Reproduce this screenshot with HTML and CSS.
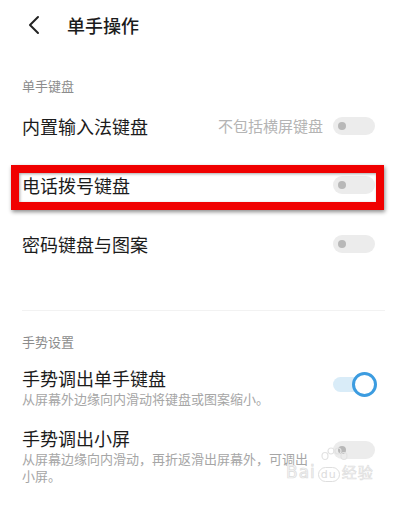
FILE: index.html
```html
<!DOCTYPE html>
<html lang="zh-CN">

<head>
    <meta charset="UTF-8">
    <meta name="viewport" content="width=device-width, initial-scale=1.0">
    <title>单手操作</title>
    <link rel="stylesheet" href="styles.css">
</head>

<body>

    <!-- Header -->
    <div class="header">
        <svg class="back" width="14" height="20" viewBox="0 0 14 20">
            <path d="M11 2 L3 10 L11 18" fill="none" stroke="#222" stroke-width="2" stroke-linecap="round" stroke-linejoin="round" />
        </svg>
        <span class="title">单手操作</span>
    </div>

    <!-- 单手键盘 -->
    <div class="group-label">单手键盘</div>

    <div class="row">
        <span class="row-title">内置输入法键盘</span>
        <span class="row-hint">不包括横屏键盘</span>
        <span class="switch"></span>
    </div>

    <div class="row">
        <span class="row-title">电话拨号键盘</span>
        <span class="switch"></span>
        <div class="highlight"></div>
    </div>

    <div class="row">
        <span class="row-title">密码键盘与图案</span>
        <span class="switch"></span>
    </div>

    <div class="divider"></div>

    <!-- 手势设置 -->
    <div class="group-label second">手势设置</div>

    <div class="row tall">
        <div class="row-text">
            <div class="row-title">手势调出单手键盘</div>
            <div class="row-sub">从屏幕外边缘向内滑动将键盘或图案缩小。</div>
        </div>
        <span class="switch on"></span>
    </div>

    <div class="row tall last">
        <div class="row-text">
            <div class="row-title">手势调出小屏</div>
            <div class="row-sub narrow">从屏幕边缘向内滑动，再折返滑出屏幕外，可调出小屏。</div>
        </div>
        <span class="switch"></span>

        <!-- watermark -->
        <div class="watermark">
            <svg class="paw" width="28" height="22" viewBox="0 0 28 22">
                <g fill="none" stroke="#e2e2e2" stroke-width="1.2">
                    <ellipse cx="5" cy="9" rx="3" ry="3.5" />
                    <ellipse cx="11" cy="4" rx="3" ry="3" />
                    <ellipse cx="18" cy="4" rx="3" ry="3" />
                    <ellipse cx="24" cy="9" rx="3" ry="3.5" />
                </g>
            </svg>
            <div class="wm-logo"><span>Bai</span><span class="du">du</span><span class="cn">经验</span></div>
            <div class="wm-url">jingyan.baidu.com</div>
        </div>
    </div>

</body>

</html>
```

FILE: styles.css
```css
body {
    margin: 0;
    background: #fff;
    font-family: "Noto Sans CJK SC", "Noto Sans", sans-serif;
    color: #1c1c1c;
}

/*--------------Header-------------*/
.header {
    height: 50px;
    display: flex;
    align-items: center;
    padding-left: 27px;
}

.back {
    margin-right: 26px;
}

.title {
    font-size: 18px;
    font-weight: 500;
}

/*--------------Groups-------------*/
.group-label {
    margin-top: 26px;
    padding-left: 22px;
    height: 20px;
    line-height: 20px;
    font-size: 13px;
    color: #8c8c8c;
}

.group-label.second {
    margin-top: 21px;
}

.divider {
    margin: 37px 18px 0 22px;
    height: 1px;
    background: #f2f2f2;
}

/*--------------Rows-------------*/
.row {
    position: relative;
    height: 59px;
    display: flex;
    align-items: center;
    padding: 0 28px 0 22px;
}

.row-title {
    font-size: 18px;
    line-height: 24px;
    flex: 1;
}

.row-hint {
    font-size: 15px;
    color: #b4b4b4;
    margin-right: 10px;
}

.row.tall {
    height: auto;
    padding-top: 14px;
    align-items: flex-start;
}

.row.tall .switch {
    margin-top: 11px;
}

.row.last .switch {
    margin-top: 15px;
}

.row-text {
    flex: 1;
}

.row-sub {
    font-size: 13px;
    line-height: 17px;
    color: #a6a6a6;
    margin-bottom: 5px;
}

.row-sub.narrow {
    width: 292px;
}

/* red highlight box */
.highlight {
    position: absolute;
    left: 11px;
    top: 10px;
    width: 357px;
    height: 29px;
    border: 8px solid #f00000;
    box-shadow: 1px 2px 4px rgba(0, 0, 0, 0.45), inset 1px 1px 3px rgba(0, 0, 0, 0.35);
}

/*--------------Switch-------------*/
.switch {
    position: relative;
    width: 42px;
    height: 18px;
    border-radius: 9px;
    background: #ececec;
    flex: none;
}

.switch::after {
    content: "";
    position: absolute;
    left: 5px;
    top: 5px;
    width: 8px;
    height: 8px;
    border-radius: 50%;
    background: #b8b8b8;
}

.switch.on {
    width: 30px;
    height: 15px;
    margin-right: 12px;
    background: #d9ecf8;
}

.switch.on::after {
    left: 19px;
    top: -5px;
    width: 19px;
    height: 19px;
    border: 3px solid #3c9ce0;
    background: #fff;
}

/*--------------Watermark-------------*/
.watermark {
    position: absolute;
    left: 286px;
    top: 35px;
    width: 94px;
}

.paw {
    display: block;
    margin: 0 0 -6px 34px;
}

.wm-logo {
    font-family: "DejaVu Sans", sans-serif;
    font-size: 17px;
    line-height: 18px;
    color: #f6f6f6;
    -webkit-text-stroke: 0.7px #dcdcdc;
    letter-spacing: 1px;
    white-space: nowrap;
}

.wm-logo .du {
    font-size: 11px;
    border: 1px solid #dedede;
    border-radius: 8px;
    padding: 0 2px;
    margin: 0 2px;
    -webkit-text-stroke: 0;
    color: #dcdcdc;
}

.wm-logo .cn {
    font-family: "Noto Sans CJK SC", sans-serif;
    font-size: 15px;
    -webkit-text-stroke: 0.6px #dedede;
    color: #f6f6f6;
}

.wm-url {
    font-family: "DejaVu Sans", sans-serif;
    font-style: italic;
    font-size: 9px;
    color: #d4d4d4;
    margin-top: 5px;
    padding-left: 4px;
}
```
